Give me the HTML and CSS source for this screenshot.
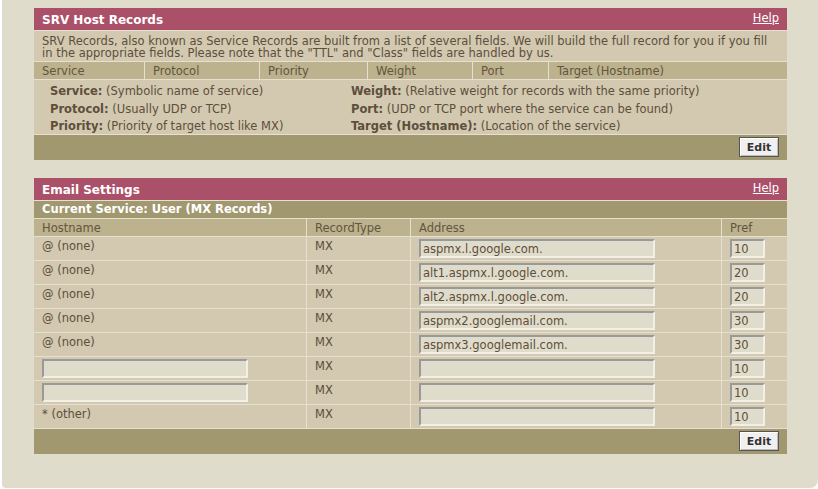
FILE: index.html
```html
<!DOCTYPE html>
<html lang="en">
<head>
    <meta charset="UTF-8">
    <title>DNS Records</title>
    <link rel="stylesheet" href="styles.css">
</head>
<body>
    <div class="page">

        <div class="panel">
            <div class="panel-title">
                <span class="panel-name">SRV Host Records</span>
                <a href="#" class="help">Help</a>
            </div>
            <div class="panel-desc">
                SRV Records, also known as Service Records are built from a list of several fields. We will build the full record for you if you fill
                in the appropriate fields. Please note that the "TTL" and "Class" fields are handled by us.
            </div>
            <table class="grid srv-head">
                <tr>
                    <th class="c-service">Service</th>
                    <th class="c-protocol">Protocol</th>
                    <th class="c-priority">Priority</th>
                    <th class="c-weight">Weight</th>
                    <th class="c-port">Port</th>
                    <th>Target (Hostname)</th>
                </tr>
            </table>
            <div class="legend">
                <div><b>Service:</b> (Symbolic name of service)</div>
                <div><b>Weight:</b> (Relative weight for records with the same priority)</div>
                <div><b>Protocol:</b> (Usually UDP or TCP)</div>
                <div><b>Port:</b> (UDP or TCP port where the service can be found)</div>
                <div><b>Priority:</b> (Priority of target host like MX)</div>
                <div><b>Target (Hostname):</b> (Location of the service)</div>
            </div>
            <div class="panel-foot">
                <button class="btn">Edit</button>
            </div>
        </div>

        <div class="panel">
            <div class="panel-title">
                <span class="panel-name">Email Settings</span>
                <a href="#" class="help">Help</a>
            </div>
            <div class="panel-sub">Current Service: User (MX Records)</div>
            <table class="grid mx">
                <tr>
                    <th class="c-host">Hostname</th>
                    <th class="c-type">RecordType</th>
                    <th class="c-addr">Address</th>
                    <th>Pref</th>
                </tr>
                <tr>
                    <td>@ (none)</td>
                    <td>MX</td>
                    <td><input class="field addr" type="text" value="aspmx.l.google.com."></td>
                    <td><input class="field pref" type="text" value="10"></td>
                </tr>
                <tr>
                    <td>@ (none)</td>
                    <td>MX</td>
                    <td><input class="field addr" type="text" value="alt1.aspmx.l.google.com."></td>
                    <td><input class="field pref" type="text" value="20"></td>
                </tr>
                <tr>
                    <td>@ (none)</td>
                    <td>MX</td>
                    <td><input class="field addr" type="text" value="alt2.aspmx.l.google.com."></td>
                    <td><input class="field pref" type="text" value="20"></td>
                </tr>
                <tr>
                    <td>@ (none)</td>
                    <td>MX</td>
                    <td><input class="field addr" type="text" value="aspmx2.googlemail.com."></td>
                    <td><input class="field pref" type="text" value="30"></td>
                </tr>
                <tr>
                    <td>@ (none)</td>
                    <td>MX</td>
                    <td><input class="field addr" type="text" value="aspmx3.googlemail.com."></td>
                    <td><input class="field pref" type="text" value="30"></td>
                </tr>
                <tr>
                    <td class="has-input"><input class="field host" type="text" value=""></td>
                    <td>MX</td>
                    <td><input class="field addr" type="text" value=""></td>
                    <td><input class="field pref" type="text" value="10"></td>
                </tr>
                <tr>
                    <td class="has-input"><input class="field host" type="text" value=""></td>
                    <td>MX</td>
                    <td><input class="field addr" type="text" value=""></td>
                    <td><input class="field pref" type="text" value="10"></td>
                </tr>
                <tr>
                    <td>* (other)</td>
                    <td>MX</td>
                    <td><input class="field addr" type="text" value=""></td>
                    <td><input class="field pref" type="text" value="10"></td>
                </tr>
            </table>
            <div class="panel-foot">
                <button class="btn">Edit</button>
            </div>
        </div>

    </div>
</body>
</html>
```

FILE: styles.css
```css
body {
    margin: 0;
    background: #fff;
    font-family: "DejaVu Sans", Verdana, sans-serif;
    font-size: 11.5px;
    color: #5e4e3c;
}

.page {
    margin-left: 2px;
    width: 816px;
    height: 488px;
    box-sizing: border-box;
    padding: 8px 31px 0 32px;
    background: #e0dccb;
    border-radius: 0 0 8px 4px;
}

.panel {
    margin-bottom: 18px;
}

.panel-title {
    display: flex;
    justify-content: space-between;
    align-items: center;
    height: 22px;
    padding: 0 8px;
    background: #ab5069;
    border-bottom: 1px solid #e6e1cf;
    color: #fff;
    font-weight: bold;
    font-size: 12px;
}

.panel-name {
    padding-top: 2px;
}

.panel-title .help {
    color: #fff;
    font-weight: normal;
    font-size: 11.5px;
    margin-top: -2px;
}

.panel-desc {
    padding: 4px 8px 2px;
    line-height: 12px;
    background: #d2c9b0;
    border-bottom: 1px solid #e6e1cf;
}

.panel-sub {
    height: 17px;
    line-height: 17px;
    padding: 0 8px;
    background: #a29870;
    border-bottom: 1px solid #e6e1cf;
    color: #fff;
    font-weight: bold;
}

.grid {
    width: 100%;
    border-collapse: collapse;
    font-size: 11.5px;
}

.grid th {
    height: 17px;
    padding: 0 8px;
    background: #bcb28d;
    font-weight: normal;
    text-align: left;
    color: #64553f;
    border-left: 1px solid #e6e1cf;
    border-bottom: 1px solid #e6e1cf;
}

.grid th:first-child,
.grid td:first-child {
    border-left: none;
}

.grid td {
    height: 17px;
    padding: 3px 8px;
    background: #d2c9b0;
    vertical-align: top;
    border-left: 1px solid #e6e1cf;
    border-bottom: 1px solid #e6e1cf;
    line-height: 13px;
}

.grid td.has-input,
.grid td:nth-child(3),
.grid td:nth-child(4) {
    padding: 2px 8px 1px 8px;
}

.c-service { width: 94px; }
.c-protocol { width: 98px; }
.c-priority { width: 91px; }
.c-weight { width: 88px; }
.c-port { width: 59px; }

.c-host { width: 256px; }
.c-type { width: 87px; }
.c-addr { width: 294px; }

.legend {
    display: grid;
    grid-template-columns: 301px 1fr;
    height: 55px;
    box-sizing: border-box;
    padding: 3px 0 0 16px;
    line-height: 17.5px;
    background: #d2c9b0;
    border-bottom: 1px solid #e6e1cf;
}

.panel-foot {
    display: flex;
    justify-content: flex-end;
    align-items: flex-start;
    height: 25px;
    box-sizing: border-box;
    padding: 2px 8px 0 0;
    background: #a29870;
}

.btn {
    width: 40px;
    height: 20px;
    padding: 0;
    font-family: inherit;
    font-size: 11px;
    font-weight: bold;
    color: #333;
    background: #f0f0f0;
    border: 1px solid #555;
    box-shadow: inset 1px 1px 0 #fff, inset -1px -1px 0 #bdbdbd;
    cursor: pointer;
}

.field {
    display: block;
    height: 19px;
    box-sizing: border-box;
    padding: 0 2px;
    font-family: inherit;
    font-size: 11.5px;
    color: #5e4e3c;
    background: #e0dccb;
    border: 2px solid;
    border-color: #999 #f2efe6 #f2efe6 #999;
}

.field.addr { width: 236px; }
.field.pref { width: 35px; }
.field.host { width: 206px; }
```
